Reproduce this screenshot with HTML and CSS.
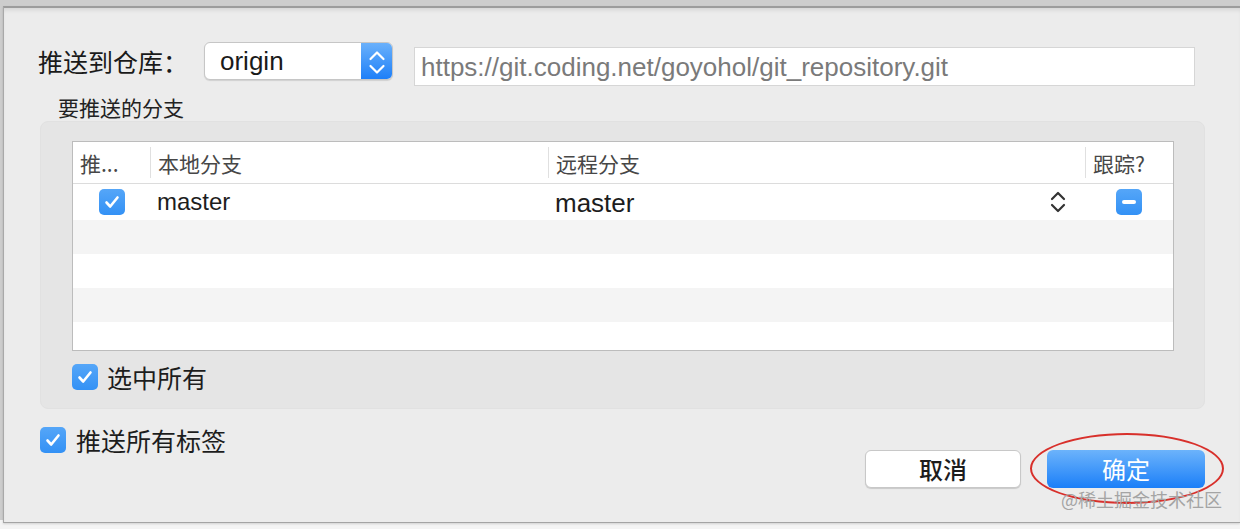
FILE: index.html
```html
<!DOCTYPE html>
<html lang="zh-CN">
<head>
    <meta charset="UTF-8">
    <title>推送</title>
    <link rel="stylesheet" href="styles.css">
</head>
<body>
    <div class="screen">
        <div class="dialog">
            <!-- 远程仓库 -->
            <div class="remote-row">
                <span class="remote-label">推送到仓库：</span>
                <div class="popup">
                    <span class="popup-value">origin</span>
                    <span class="popup-arrows">
                        <svg width="32" height="38" viewBox="0 0 32 38">
                            <path d="M9.5 17 L16 10.5 L22.5 17" fill="none" stroke="#fff" stroke-width="2.2" stroke-linecap="round" stroke-linejoin="round"/>
                            <path d="M9.5 24 L16 30.5 L22.5 24" fill="none" stroke="#fff" stroke-width="2.2" stroke-linecap="round" stroke-linejoin="round"/>
                        </svg>
                    </span>
                </div>
                <div class="url-field">https://git.coding.net/goyohol/git_repository.git</div>
            </div>

            <!-- 分支列表 -->
            <div class="group-title">要推送的分支</div>
            <div class="group-box">
                <div class="branch-table">
                    <div class="table-head">
                        <div class="cell col-push">推...</div>
                        <div class="cell col-local">本地分支</div>
                        <div class="cell col-remote">远程分支</div>
                        <div class="cell col-track">跟踪?</div>
                    </div>
                    <div class="table-body">
                        <div class="row">
                            <div class="cell col-push">
                                <span class="checkbox">
                                    <svg width="26" height="26" viewBox="0 0 26 26"><path d="M7.5 13.5 L11.2 17.5 L18.5 8.5" fill="none" stroke="#fff" stroke-width="2.6" stroke-linecap="round" stroke-linejoin="round"/></svg>
                                </span>
                            </div>
                            <div class="cell col-local">master</div>
                            <div class="cell col-remote">
                                <span class="remote-name">master</span>
                                <svg class="stepper" width="16" height="24" viewBox="0 0 16 24">
                                    <path d="M2 9 L8 3 L14 9" fill="none" stroke="#333" stroke-width="2.2" stroke-linecap="round" stroke-linejoin="round"/>
                                    <path d="M2 15 L8 21 L14 15" fill="none" stroke="#333" stroke-width="2.2" stroke-linecap="round" stroke-linejoin="round"/>
                                </svg>
                            </div>
                            <div class="cell col-track"><span class="minus-box"><span class="minus-bar"></span></span></div>
                        </div>
                        <div class="row alt"></div>
                        <div class="row"></div>
                        <div class="row alt"></div>
                        <div class="row"></div>
                    </div>
                </div>
                <div class="check-row select-all">
                    <span class="checkbox">
                        <svg width="26" height="26" viewBox="0 0 26 26"><path d="M7.5 13.5 L11.2 17.5 L18.5 8.5" fill="none" stroke="#fff" stroke-width="2.6" stroke-linecap="round" stroke-linejoin="round"/></svg>
                    </span>
                    <span>选中所有</span>
                </div>
            </div>

            <!-- 底部 -->
            <div class="footer">
                <div class="check-row push-tags">
                    <span class="checkbox">
                        <svg width="26" height="26" viewBox="0 0 26 26"><path d="M7.5 13.5 L11.2 17.5 L18.5 8.5" fill="none" stroke="#fff" stroke-width="2.6" stroke-linecap="round" stroke-linejoin="round"/></svg>
                    </span>
                    <span>推送所有标签</span>
                </div>
                <div class="buttons">
                    <button class="btn btn-cancel">取消</button>
                    <div class="ok-wrap">
                        <button class="btn btn-ok">确定</button>
                        <span class="ring"></span>
                    </div>
                </div>
            </div>

            <div class="watermark">@稀土掘金技术社区</div>
        </div>
    </div>
</body>
</html>
```

FILE: styles.css
```css
html, body {
    margin: 0;
    padding: 0;
}

body {
    font-family: 'Liberation Sans', 'Noto Sans CJK SC', sans-serif;
    color: #1d1d1d;
    background: #cdcdcd;
}

.screen {
    width: 1240px;
    height: 529px;
    overflow: hidden;
    background: linear-gradient(#cdcdcd 0, #cdcdcd 520px, #f4f4f4 520px);
}

.dialog {
    position: relative;
    box-sizing: border-box;
    height: 517px;
    margin: 6px 0 0 3px;
    padding: 34px 0 0 36px;
    background: #ececec;
    border-top: 2px solid #9c9c9c;
    border-left: 1px solid #a9a9a9;
    border-bottom: 1px solid #a4a4a4;
    box-shadow: inset 0 4px 4px -2px rgba(0, 0, 0, 0.1), 0 1px 2px rgba(0, 0, 0, 0.15);
}

/* 仓库行 */
.remote-row {
    display: flex;
    align-items: flex-start;
}

.remote-label {
    flex-shrink: 0;
    width: 166px;
    margin-left: -2px;
    font-size: 25px;
    line-height: 38px;
    font-family: 'Noto Sans CJK SC', sans-serif;
    color: #1a1a1a;
}

.popup {
    display: flex;
    box-sizing: border-box;
    width: 189px;
    height: 38px;
    background: #fff;
    border: 1px solid #c6c6c6;
    border-radius: 6px;
    box-shadow: 0 1px 1px rgba(0, 0, 0, 0.12);
    overflow: hidden;
}

.popup-value {
    flex: 1;
    padding-left: 15px;
    font-size: 26px;
    line-height: 37px;
    color: #1a1a1a;
}

.popup-arrows {
    display: flex;
    width: 32px;
    margin: -1px -1px -1px 0;
    background: linear-gradient(#6cb2fb, #1c7ef8);
}

.url-field {
    box-sizing: border-box;
    width: 781px;
    height: 39px;
    margin: 5px 0 0 21px;
    padding-left: 6px;
    background: #fff;
    border: 1px solid #d6d6d6;
    font-size: 26px;
    line-height: 38px;
    color: #7a7a7a;
    white-space: nowrap;
}

.group-title {
    margin: 9px 0 0 18px;
    font-family: 'Noto Sans CJK SC', sans-serif;
    font-size: 21px;
    line-height: 24px;
    color: #222;
}

/* 分支分组 */
.group-box {
    box-sizing: border-box;
    width: 1165px;
    height: 288px;
    margin-top: 2px;
    padding: 20px 31px 0 32px;
    background: #e5e5e5;
    border: 1px solid #e1e1e1;
    border-radius: 8px;
}

.group-box .branch-table {
    margin: -1px 0 0 -1px;
}

.branch-table {
    box-sizing: border-box;
    width: 1102px;
    height: 210px;
    background: #fff;
    border: 1px solid #bcbcbc;
}

.table-head {
    display: flex;
    height: 41px;
    border-bottom: 1px solid #dcdcdc;
}

.table-head .cell {
    margin: 5px 0;
    font-family: 'Noto Sans CJK SC', sans-serif;
    font-size: 21px;
    color: #474747;
}

.table-head .col-local,
.table-head .col-remote,
.table-head .col-track {
    border-left: 1px solid #e0e0e0;
}

.table-head .col-push {
    padding-left: 7px;
}

.cell {
    display: flex;
    align-items: center;
    box-sizing: border-box;
    padding-left: 7px;
}

.col-push { width: 77px; }
.col-local { width: 398px; }
.col-remote { width: 537px; }
.col-track { width: 88px; }

.table-body {
    height: 166px;
    overflow: hidden;
}

.row {
    display: flex;
    height: 34px;
    background: #fff;
}

.row:first-child {
    height: 36px;
}

.row.alt {
    background: #f4f4f4;
}

.row .col-push {
    justify-content: center;
    padding-left: 0;
}

.row .col-local {
    font-size: 24px;
    color: #1d1d1d;
}

.row .col-remote {
    padding-right: 19px;
    font-size: 26px;
    color: #1d1d1d;
}

.remote-name {
    margin-top: 3px;
}

.stepper {
    margin-left: auto;
}

.row .col-track {
    justify-content: center;
    padding-left: 0;
}

.checkbox {
    display: inline-flex;
    flex-shrink: 0;
    width: 26px;
    height: 26px;
    border-radius: 5px;
    background: linear-gradient(#55a6f8, #3391f5);
}

.minus-box {
    display: inline-flex;
    align-items: center;
    justify-content: center;
    width: 26px;
    height: 26px;
    border-radius: 5px;
    background: linear-gradient(#55a6f8, #3391f5);
}

.minus-bar {
    width: 14px;
    height: 4px;
    border-radius: 2px;
    background: #fff;
}

.check-row {
    display: flex;
    align-items: center;
    height: 26px;
    font-family: 'Noto Sans CJK SC', sans-serif;
    font-size: 25px;
    color: #1d1d1d;
}

.select-all {
    gap: 9px;
    margin: 13px 0 0 -1px;
}

.push-tags {
    gap: 10px;
}

/* 底部按钮 */
.footer {
    display: flex;
    justify-content: space-between;
    align-items: flex-start;
    width: 1165px;
    margin-top: 18px;
}

.buttons {
    display: flex;
    gap: 26px;
    margin-top: 23px;
}

.btn {
    box-sizing: border-box;
    height: 38px;
    padding: 0;
    border-radius: 6px;
    font-family: 'Noto Sans CJK SC', sans-serif;
    font-size: 24px;
    line-height: 36px;
    cursor: pointer;
}

.btn-cancel {
    width: 156px;
    background: #fff;
    border: 1px solid #c8c8c8;
    box-shadow: 0 1px 1px rgba(0, 0, 0, 0.15);
    color: #1d1d1d;
    font-weight: 500;
}

.btn-ok {
    width: 158px;
    background: linear-gradient(#6cb3fb, #1b7ff8);
    border: none;
    color: #fff;
}

.ok-wrap {
    position: relative;
}

.ring {
    position: absolute;
    left: -17px;
    top: -17px;
    width: 190px;
    height: 67px;
    border: 2px solid #d8302b;
    border-radius: 50%;
}

.watermark {
    position: absolute;
    right: 18px;
    bottom: 13px;
    font-family: 'Noto Sans CJK SC', sans-serif;
    font-size: 18px;
    line-height: 20px;
    color: #a4a4a4;
}
```
